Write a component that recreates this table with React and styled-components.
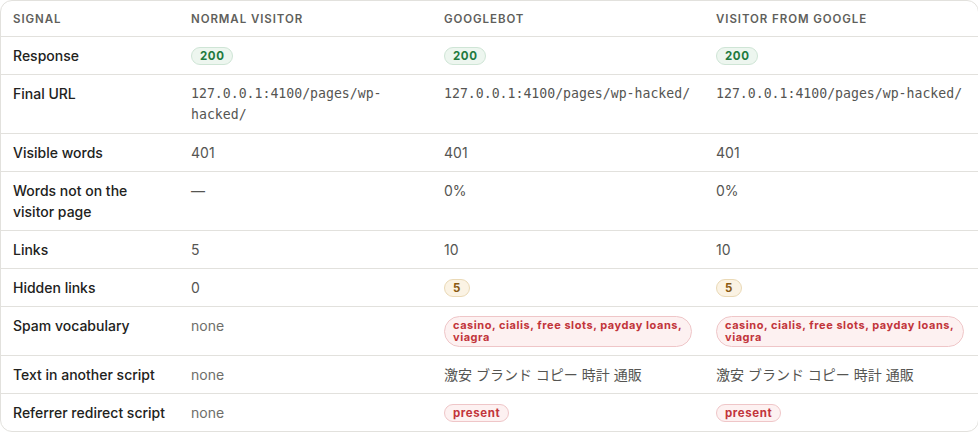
import React from "react";
import styled, { createGlobalStyle } from "styled-components";

const GlobalStyle = createGlobalStyle`
  html, body {
    margin: 0;
    padding: 0;
    background: #ffffff;
  }
  body {
    font-family: "Inter", "Noto Sans CJK JP", sans-serif;
    -webkit-font-smoothing: antialiased;
  }
`;

const Wrap = styled.div`
  width: 977px;
  border: 1px solid #e2e1dd;
  border-radius: 12px;
  overflow: hidden;
  background: #fff;
`;

const Table = styled.table`
  width: 100%;
  border-collapse: collapse;
  table-layout: fixed;
  font-size: 14px;
  line-height: 21px;
`;

const Th = styled.th`
  text-align: left;
  font-weight: 600;
  font-size: 11.5px;
  letter-spacing: 0.08em;
  text-transform: uppercase;
  color: #5f5f5c;
  padding: 8px 12px 6px;
  height: 21px;
  border-bottom: 1px solid #e2e1dd;
`;

const Tr = styled.tr`
  &:not(:last-child) td {
    border-bottom: 1px solid #e2e1dd;
  }
`;

const Label = styled.td`
  vertical-align: top;
  padding: 8px 12px;
  font-weight: 500;
  color: #222220;
`;

const Cell = styled.td`
  vertical-align: top;
  padding: 8px 12px;
  color: ${(p) => (p.$muted ? "#6e6e6a" : "#555552")};
  font-family: ${(p) =>
    p.$mono
      ? '"DejaVu Sans Mono", "Liberation Mono", monospace'
      : '"Inter", "Noto Sans CJK JP", sans-serif'};
  font-size: ${(p) => (p.$mono ? "13.2px" : "14px")};
`;

const tones = {
  ok: { bg: "#edf6ef", border: "#cfe5d6", color: "#1f7a3f" },
  warn: { bg: "#fbf3e4", border: "#ead9b6", color: "#8a5a12" },
  bad: { bg: "#fdf1f1", border: "#efc6c8", color: "#c2353b" },
};

const Badge = styled.span`
  display: inline-block;
  box-sizing: border-box;
  font-size: 11.5px;
  font-weight: 700;
  line-height: 12px;
  letter-spacing: 0.05em;
  padding: 2px 8px;
  border-radius: 999px;
  vertical-align: middle;
  background: ${(p) => tones[p.$tone].bg};
  border: 1px solid ${(p) => tones[p.$tone].border};
  color: ${(p) => tones[p.$tone].color};
  ${(p) => p.$wide && "font-size: 11px; padding: 2px 8px 3px; border-radius: 16px;"}
`;

const BadgeLine = styled.div`
  line-height: 21px;
  display: flex;
  align-items: center;
  height: 21px;
`;

const SpamBox = styled.div`
  padding-top: 1px;
  max-width: 248px;
`;

const spam = "casino, cialis, free slots, payday loans, viagra";

function Value({ v }) {
  if (v.badge) {
    if (v.wide) {
      return (
        <SpamBox>
          <Badge $tone={v.badge} $wide>
            {v.text}
          </Badge>
        </SpamBox>
      );
    }
    return (
      <BadgeLine>
        <Badge $tone={v.badge}>{v.text}</Badge>
      </BadgeLine>
    );
  }
  return v.text;
}

const rows = [
  {
    label: "Response",
    cells: [
      { badge: "ok", text: "200" },
      { badge: "ok", text: "200" },
      { badge: "ok", text: "200" },
    ],
  },
  {
    label: "Final URL",
    mono: true,
    cells: [
      { text: "127.0.0.1:4100/pages/wp-hacked/" },
      { text: "127.0.0.1:4100/pages/wp-hacked/" },
      { text: "127.0.0.1:4100/pages/wp-hacked/" },
    ],
  },
  { label: "Visible words", cells: [{ text: "401" }, { text: "401" }, { text: "401" }] },
  {
    label: "Words not on the visitor page",
    cells: [{ text: "—" }, { text: "0%" }, { text: "0%" }],
  },
  { label: "Links", cells: [{ text: "5" }, { text: "10" }, { text: "10" }] },
  {
    label: "Hidden links",
    cells: [{ text: "0" }, { badge: "warn", text: "5" }, { badge: "warn", text: "5" }],
  },
  {
    label: "Spam vocabulary",
    cells: [
      { text: "none", muted: true },
      { badge: "bad", text: spam, wide: true },
      { badge: "bad", text: spam, wide: true },
    ],
  },
  {
    label: "Text in another script",
    cells: [
      { text: "none", muted: true },
      { text: "激安 ブランド コピー 時計 通販" },
      { text: "激安 ブランド コピー 時計 通販" },
    ],
  },
  {
    label: "Referrer redirect script",
    cells: [
      { text: "none", muted: true },
      { badge: "bad", text: "present" },
      { badge: "bad", text: "present" },
    ],
  },
];

export default function App() {
  return (
    <>
      <GlobalStyle />
      <Wrap>
        <Table>
          <colgroup>
            <col style={{ width: 178 }} />
            <col style={{ width: 253 }} />
            <col style={{ width: 272 }} />
            <col />
          </colgroup>
          <thead>
            <tr>
              <Th>Signal</Th>
              <Th>Normal visitor</Th>
              <Th>Googlebot</Th>
              <Th>Visitor from Google</Th>
            </tr>
          </thead>
          <tbody>
            {rows.map((r) => (
              <Tr key={r.label}>
                <Label>{r.label}</Label>
                {r.cells.map((c, i) => (
                  <Cell key={i} $mono={r.mono} $muted={c.muted}>
                    <Value v={c} />
                  </Cell>
                ))}
              </Tr>
            ))}
          </tbody>
        </Table>
      </Wrap>
    </>
  );
}
